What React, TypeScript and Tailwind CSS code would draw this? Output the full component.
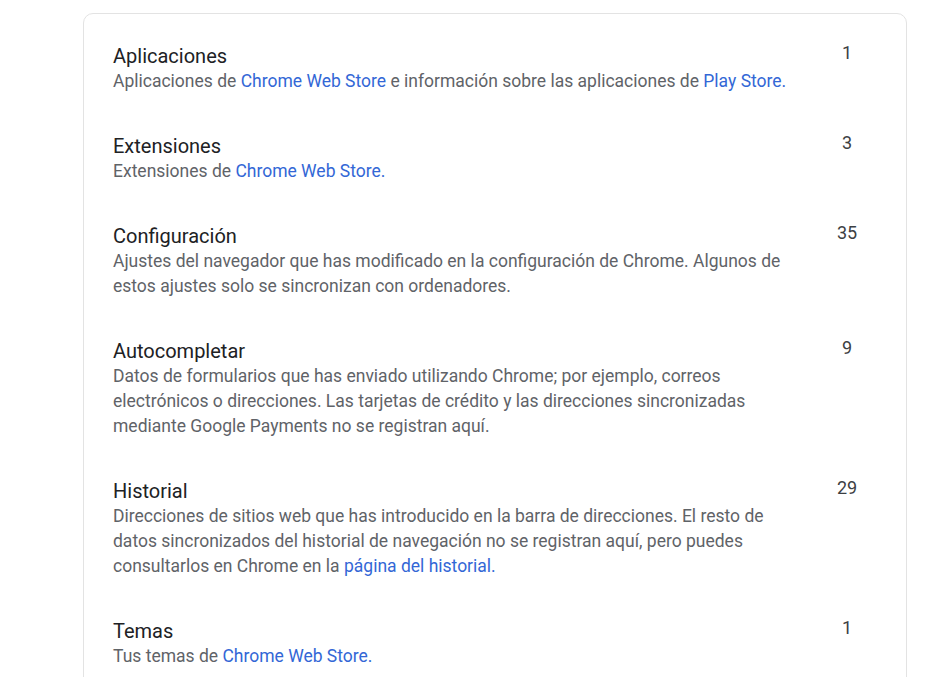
import React from "react";

const L = ({ children }: { children: React.ReactNode }) => (
  <span className="text-[#3367d6]">{children}</span>
);

type Row = { title: string; count: string; desc: React.ReactNode };

const rows: Row[] = [
  {
    title: "Aplicaciones",
    count: "1",
    desc: (
      <>
        Aplicaciones de <L>Chrome Web Store</L> e información sobre las aplicaciones de <L>Play Store.</L>
      </>
    ),
  },
  {
    title: "Extensiones",
    count: "3",
    desc: (
      <>
        Extensiones de <L>Chrome Web Store.</L>
      </>
    ),
  },
  {
    title: "Configuración",
    count: "35",
    desc: (
      <>
        Ajustes del navegador que has modificado en la configuración de Chrome. Algunos de estos ajustes solo se sincronizan con ordenadores.
      </>
    ),
  },
  {
    title: "Autocompletar",
    count: "9",
    desc: (
      <>
        Datos de formularios que has enviado utilizando Chrome; por ejemplo, correos electrónicos o direcciones. Las tarjetas de crédito y las direcciones sincronizadas mediante Google Payments no se registran aquí.
      </>
    ),
  },
  {
    title: "Historial",
    count: "29",
    desc: (
      <>
        Direcciones de sitios web que has introducido en la barra de direcciones. El resto de datos sincronizados del historial de navegación no se registran aquí, pero puedes consultarlos en Chrome en la <L>página del historial.</L>
      </>
    ),
  },
  {
    title: "Temas",
    count: "1",
    desc: (
      <>
        Tus temas de <L>Chrome Web Store.</L>
      </>
    ),
  },
];

export default function App() {
  return (
    <div
      className="min-h-[677px] w-[938px] overflow-hidden bg-white"
      style={{ fontFamily: "Roboto, 'Noto Sans', sans-serif" }}
    >
      <div className="ml-[83px] mt-[13px] w-[824px] rounded-[10px] border border-[#e3e3e3] pl-[29px] pr-[39px] pt-[30px] pb-[40px]">
        <div className="flex flex-col gap-[40px]">
          {rows.map((r) => (
            <div key={r.title} className="flex items-start">
              <div className="flex-1 pr-[33px]">
                <div className="text-[20px] leading-[25px] text-[#202124]">{r.title}</div>
                <div className="text-[17.5px] leading-[25px] text-[#5f6368]">{r.desc}</div>
              </div>
              <div className="w-[40px] -mt-[4px] text-center text-[18px] leading-[25px] text-[#3c4043]">
                {r.count}
              </div>
            </div>
          ))}
        </div>
      </div>
    </div>
  );
}
